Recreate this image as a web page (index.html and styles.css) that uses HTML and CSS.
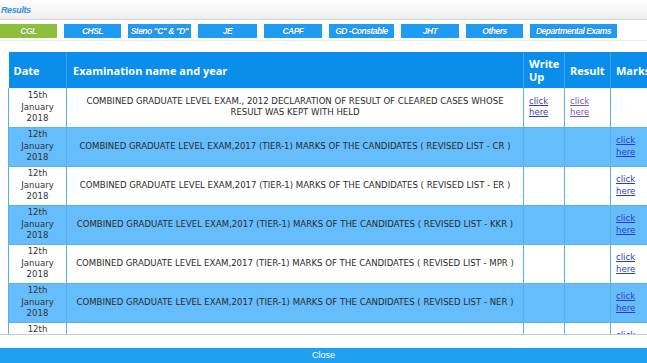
FILE: index.html
```html
<!DOCTYPE html>
<html>
<head>
<meta charset="utf-8">
<link rel="stylesheet" href="styles.css">
</head>
<body>
<div class="titlebar"><span class="title">Results</span></div>
<div class="tabs">
  <span class="tab active t-cgl">CGL</span>
  <span class="tab t-chsl">CHSL</span>
  <span class="tab t-steno">Steno "C" &amp; "D"</span>
  <span class="tab t-je">JE</span>
  <span class="tab t-capf">CAPF</span>
  <span class="tab t-gd">GD -Constable</span>
  <span class="tab t-jht">JHT</span>
  <span class="tab t-oth">Others</span>
  <span class="tab t-dep">Departmental Exams</span>
</div>
<div class="scroll">
  <table class="results">
    <colgroup>
      <col class="c-date"><col class="c-name"><col class="c-wu"><col class="c-res"><col class="c-marks">
    </colgroup>
    <thead>
      <tr>
        <th class="h-date">Date</th>
        <th class="h-name">Examination name and year</th>
        <th>Write Up</th>
        <th>Result</th>
        <th>Marks</th>
      </tr>
    </thead>
    <tbody>
      <tr>
        <td class="date">15th January 2018</td>
        <td class="name">COMBINED GRADUATE LEVEL EXAM., 2012 DECLARATION OF RESULT OF CLEARED CASES WHOSE RESULT WAS KEPT WITH HELD</td>
        <td class="link"><a href="#" class="wu">click here</a></td>
        <td class="link"><a href="#" class="visited">click here</a></td>
        <td class="link"></td>
      </tr>
      <tr class="alt">
        <td class="date">12th January 2018</td>
        <td class="name">COMBINED GRADUATE LEVEL EXAM,2017 (TIER-1) MARKS OF THE CANDIDATES ( REVISED LIST - CR )</td>
        <td class="link"></td><td class="link"></td>
        <td class="link"><a href="#">click here</a></td>
      </tr>
      <tr>
        <td class="date">12th January 2018</td>
        <td class="name">COMBINED GRADUATE LEVEL EXAM,2017 (TIER-1) MARKS OF THE CANDIDATES ( REVISED LIST - ER )</td>
        <td class="link"></td><td class="link"></td>
        <td class="link"><a href="#">click here</a></td>
      </tr>
      <tr class="alt">
        <td class="date">12th January 2018</td>
        <td class="name">COMBINED GRADUATE LEVEL EXAM,2017 (TIER-1) MARKS OF THE CANDIDATES ( REVISED LIST - KKR )</td>
        <td class="link"></td><td class="link"></td>
        <td class="link"><a href="#">click here</a></td>
      </tr>
      <tr>
        <td class="date">12th January 2018</td>
        <td class="name">COMBINED GRADUATE LEVEL EXAM,2017 (TIER-1) MARKS OF THE CANDIDATES ( REVISED LIST - MPR )</td>
        <td class="link"></td><td class="link"></td>
        <td class="link"><a href="#">click here</a></td>
      </tr>
      <tr class="alt">
        <td class="date">12th January 2018</td>
        <td class="name">COMBINED GRADUATE LEVEL EXAM,2017 (TIER-1) MARKS OF THE CANDIDATES ( REVISED LIST - NER )</td>
        <td class="link"></td><td class="link"></td>
        <td class="link"><a href="#">click here</a></td>
      </tr>
      <tr>
        <td class="date">12th January 2018</td>
        <td class="name">COMBINED GRADUATE LEVEL EXAM,2017 (TIER-1) MARKS OF THE CANDIDATES ( REVISED LIST - NR )</td>
        <td class="link"></td><td class="link"></td>
        <td class="link"><a href="#">click here</a></td>
      </tr>
    </tbody>
  </table>
</div>
<div class="spacer"></div>
<div class="closebar">Close</div>
</body>
</html>
```
FILE: styles.css
```css
html, body {
  margin: 0;
  padding: 0;
  background: #ffffff;
  width: 647px;
  height: 363px;
  overflow: hidden;
  font-family: "DejaVu Sans", Verdana, sans-serif;
}

.titlebar {
  height: 19px;
  border-bottom: 1px solid #d6d6d6;
  background: linear-gradient(#fdfdfd, #eeeeee);
  display: flex;
  align-items: center;
}
.title {
  font-family: "Liberation Sans", Arial, sans-serif;
  font-style: italic;
  font-weight: bold;
  font-size: 9px;
  color: #3d8fd8;
  letter-spacing: -0.4px;
  padding-left: 1px;
}

.tabs {
  display: flex;
  gap: 7px;
  margin-top: 4px;
  height: 14px;
}
.tab {
  height: 14px;
  line-height: 14px;
  background: #1f9bf2;
  color: #ffffff;
  text-align: center;
  font-family: "Liberation Sans", Arial, sans-serif;
  font-style: italic;
  font-weight: bold;
  font-size: 8.5px;
  letter-spacing: -0.5px;
  text-shadow: 0 0 1px rgba(0,0,0,0.4);
}
.tab.active { background: #8cc03c; }
.t-cgl { width: 57px; }
.t-chsl { width: 57px; }
.t-steno { width: 63px; }
.t-je { width: 59px; }
.t-capf { width: 58px; }
.t-gd { width: 65px; }
.t-jht { width: 58px; }
.t-oth { width: 57px; }
.t-dep { width: 87px; }

.scroll {
  margin-top: 2px;
  height: 282px;
  border-top: 1px solid #ececec;
  border-bottom: 1px solid #c9c9c9;
  overflow: hidden;
  padding: 11px 0 0 8px;
}

.results {
  border-collapse: collapse;
  table-layout: fixed;
  width: 647px;
}
.c-date { width: 58px; }
.c-name { width: 457px; }
.c-wu { width: 41px; }
.c-res { width: 46px; }
.c-marks { width: 45px; }

.results th {
  background: #0b8deb;
  color: #ffffff;
  font-family: "Open Sans", sans-serif;
  font-weight: bold;
  font-size: 11px;
  line-height: 13px;
  height: 36px;
  padding: 0 5px;
  text-align: left;
  border-left: 1px solid #3fa5ee;
  box-sizing: border-box;
  white-space: normal;
}
.results th:first-child { border-left: none; }
.results th.h-name { padding-left: 6px; }

.results td {
  height: 39px;
  box-sizing: border-box;
  border: 1px solid #5ab0ea;
  border-top: none;
  font-size: 8.55px;
  line-height: 11.5px;
  color: #2a2a2a;
  padding: 0 4px;
  background: #ffffff;
}
.results tr.alt td { background: #66bdfb; }
.results td.date { text-align: center; color: #333333; padding: 0 2px; }
.results td.name { text-align: center; padding: 0 8px; }
.results td.link { vertical-align: middle; padding-left: 5px; padding-right: 2px; }
.results a { color: #2e3bbf; text-decoration: underline; }
.results a.wu { color: #3b3d9e; }
.results a.visited { color: #7b59a6; }

.spacer { height: 13px; }

.closebar {
  height: 15px;
  line-height: 15px;
  background: #1f9ff0;
  color: #ffffff;
  text-align: center;
  font-family: "Liberation Sans", Arial, sans-serif;
  font-size: 9px;
}
```
